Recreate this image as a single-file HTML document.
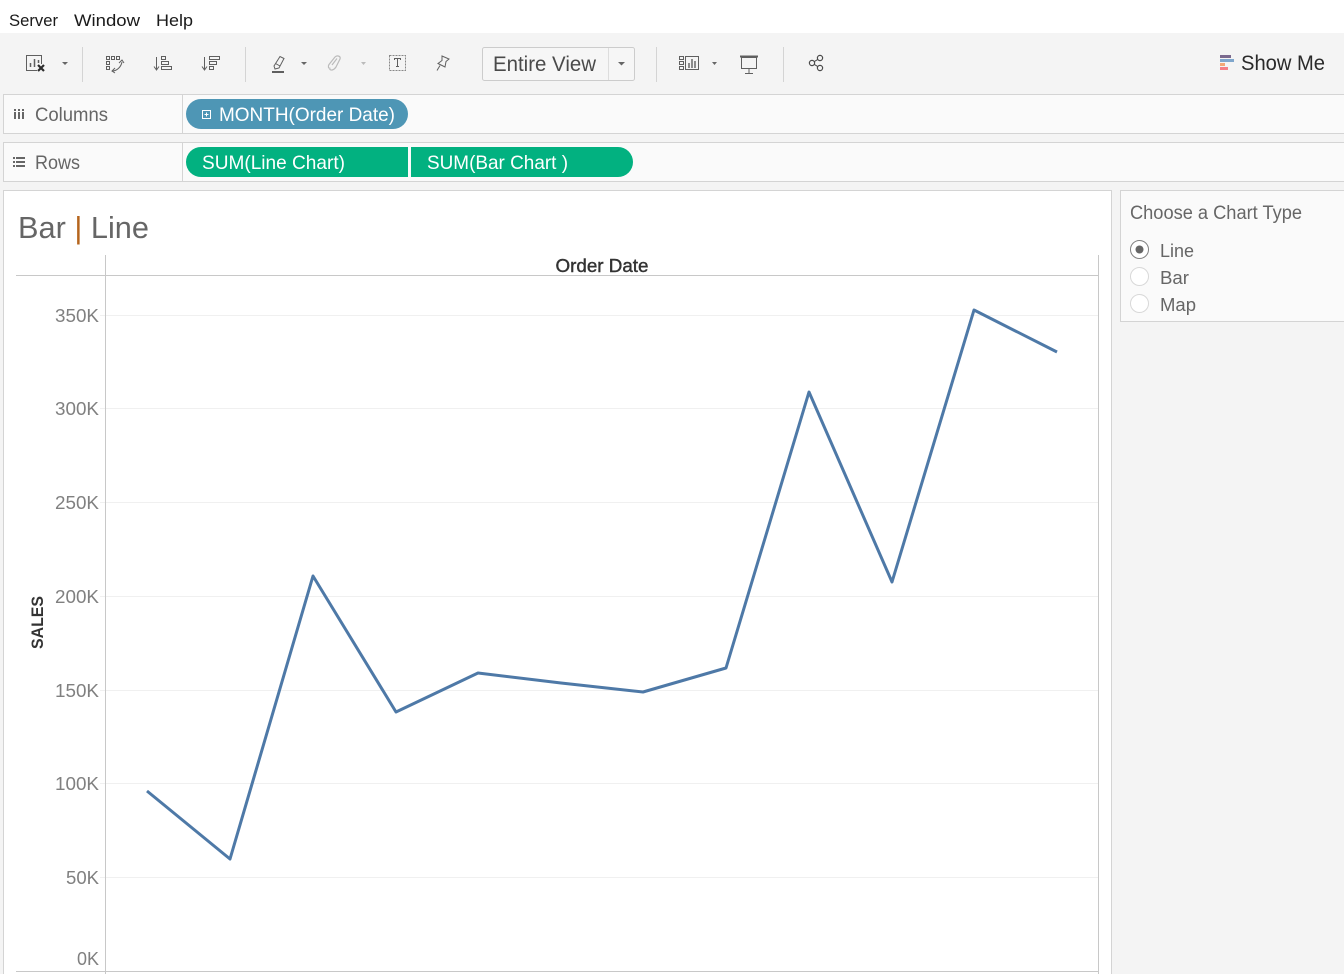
<!DOCTYPE html>
<html><head><meta charset="utf-8"><title>Bar | Line</title>
<style>
html,body{margin:0;padding:0;background:#f4f4f4;overflow:hidden}
svg{display:block}
text{font-family:"Liberation Sans",sans-serif}
</style></head><body>
<svg width="1344" height="974" viewBox="0 0 1344 974" xmlns="http://www.w3.org/2000/svg">
<rect width="1344" height="974" fill="#f4f4f4"/>
<rect width="1344" height="33" fill="#fff"/>
<g font-size="17" fill="#1a1a1a">
<text x="9" y="26" textLength="49" lengthAdjust="spacingAndGlyphs">Server</text>
<text x="74" y="26" textLength="66" lengthAdjust="spacingAndGlyphs">Window</text>
<text x="156" y="26" textLength="37" lengthAdjust="spacingAndGlyphs">Help</text>
</g>
<!-- toolbar separators -->
<g stroke="#d4d4d4" stroke-width="1">
<path d="M82.500 47V82M245.500 47V82M656.500 47V82M783.500 47V82"/>
</g>
<!-- Entire view -->
<rect x="482.500" y="47.500" width="152" height="33" rx="2" fill="#f6f6f6" stroke="#ccc"/>
<path d="M608.500 48V80" stroke="#ddd"/>
<text x="493" y="71" font-size="21" fill="#4a4a4a" textLength="103" lengthAdjust="spacingAndGlyphs">Entire View</text>
<!-- toolbar icons -->
<g fill="none" stroke="#5f5f5f" stroke-width="1">
<path d="M41.500 64V55.500H26.500V70.500H37"/>
<path d="M30.500 67V63M34.500 67V59M38.500 63V60" stroke-width="1.500"/>
<path d="M38 65L44 71M44 65L38 71" stroke="#2c2c2c" stroke-width="2.200"/>
<path d="M106.500 56.500h3v3h-3zM111.500 56.500h3v3h-3zM116.500 56.500h3v3h-3zM106.500 61.500h3v3h-3zM106.500 66.500h3v3h-3z"/>
<path d="M122 62C121 67 117 71 112 71"/>
<path d="M119 63L122 60L124 63M115 68L112 71L115 73"/>
<path d="M156.500 57V69M154 66.500L156.500 70L159 66.500"/>
<path d="M161.500 56.500h4v3h-4zM161.500 61.500h7v3h-7zM161.500 66.500h10v3h-10z"/>
<path d="M204.500 57V69M202 66.500L204.500 70L207 66.500"/>
<path d="M209.500 56.500h10v3h-10zM209.500 61.500h7v3h-7zM209.500 66.500h4v3h-4z"/>
<path d="M274 66L280 56.500L284 58.500L279 68L275 69ZM275.500 63.500L280 66"/>
<path d="M330.500 68C328 69 328 66 329 64.500L335 57C337 55 341 56 340 59L336 67C334 70 331 71 329.500 69M332 65L337 58.500" stroke="#bbb" stroke-width="1.200"/>
<rect x="389.500" y="55.500" width="16" height="15" stroke="#888" stroke-dasharray="2 1"/>
<path d="M394.500 60V58.500h6V60M397.500 59V66.500M396 66.500h3" stroke="#5f5f5f"/>
<path d="M442 56L449 59L446 61.500L445 67L438 63.500L442 60.500ZM440 65.500L437 70.500"/>
<path d="M679.500 56.500h4v3h-4zM679.500 61.500h4v3h-4zM679.500 66.500h4v3h-4zM685.500 56.500h13v13h-13z"/>
<path d="M689 68V63M692 68V59M695 68V61" stroke-width="1.400"/>
<path d="M741.500 57.500h15v11h-15zM749 68.500V73M745 73.500h8"/>
<path d="M740 56.500h18" stroke-width="2"/>
<circle cx="820" cy="58" r="2.600" stroke-width="1.200" stroke="#4a4a4a"/>
<circle cx="812" cy="63" r="2.600" stroke-width="1.200" stroke="#4a4a4a"/>
<circle cx="820" cy="68" r="2.600" stroke-width="1.200" stroke="#4a4a4a"/>
<path d="M814.300 61.600L817.800 59.400M814.300 64.400L817.800 66.600" stroke="#4a4a4a"/>
</g>
<rect x="272" y="71" width="12" height="2" fill="#5f5f5f"/>
<g fill="#666">
<path d="M62 62h6l-3 3z"/><path d="M301 62h6l-3 3z"/>
<path d="M712 62h5l-2.500 3z"/>
<path d="M618 62h7l-3.500 3.500z"/>
</g>
<path d="M361 62h5l-2.500 3z" fill="#bbb"/>
<!-- Show me -->
<rect x="1220" y="55" width="11" height="3" fill="#7b6a8e"/>
<rect x="1220" y="59" width="14" height="3" fill="#7fa6cc"/>
<rect x="1220" y="63" width="5" height="3" fill="#f2a877"/>
<rect x="1220" y="67" width="8" height="3" fill="#f47f86"/>
<text x="1241" y="70" font-size="21" fill="#2a2a2a" textLength="84" lengthAdjust="spacingAndGlyphs">Show Me</text>
<!-- shelves -->
<g fill="#fafafa" stroke="#d4d4d4">
<rect x="3.500" y="94.500" width="1345" height="39"/>
<rect x="3.500" y="142.500" width="1345" height="39"/>
</g>
<path d="M182.500 95V133M182.500 143V181" stroke="#d4d4d4"/>
<g fill="#666"><rect x="14" y="112" width="2" height="7"/><rect x="18" y="112" width="2" height="7"/><rect x="22" y="112" width="2" height="7"/>
<rect x="14" y="109" width="2" height="2"/><rect x="18" y="109" width="2" height="2"/><rect x="22" y="109" width="2" height="2"/>
<path d="M13 157h2v2h-2zM16 157h9v2h-9zM13 161h2v2h-2zM16 161h9v2h-9zM13 165h2v2h-2zM16 165h9v2h-9z"/></g>
<g font-size="19" fill="#666">
<text x="35" y="121" textLength="73" lengthAdjust="spacingAndGlyphs">Columns</text>
<text x="35" y="169" textLength="45" lengthAdjust="spacingAndGlyphs">Rows</text>
</g>
<!-- pills -->
<rect x="186" y="99" width="222" height="30" rx="15" fill="#4e96b5"/>
<rect x="202.500" y="110.500" width="8" height="8" fill="none" stroke="#fff"/>
<path d="M204.500 114.500h4M206.500 112.500v4" stroke="#fff"/>
<path d="M201 147H408V177H201A15 15 0 0 1 201 147Z" fill="#02b180"/>
<path d="M411 147H618A15 15 0 0 1 618 177H411Z" fill="#02b180"/>
<g font-size="19.500" fill="#fff">
<text x="219" y="121" textLength="176" lengthAdjust="spacingAndGlyphs">MONTH(Order Date)</text>
<text x="202" y="169" textLength="143" lengthAdjust="spacingAndGlyphs">SUM(Line Chart)</text>
<text x="427" y="169" textLength="141" lengthAdjust="spacingAndGlyphs">SUM(Bar Chart )</text>
</g>
<!-- view -->
<rect x="3.500" y="190.500" width="1108" height="800" fill="#fff" stroke="#d4d4d4"/>
<text x="18" y="238" font-size="31" fill="#666" textLength="131" lengthAdjust="spacingAndGlyphs">Bar <tspan fill="#b5651d">|</tspan> Line</text>
<!-- grid -->
<g stroke="#f0f0f0">
<path d="M100 315.500H1098M100 408.500H1098M100 502.500H1098M100 596.500H1098M100 690.500H1098M100 783.500H1098M100 877.500H1098"/>
</g>
<g stroke="#c8c8c8">
<path d="M105.500 255V974M1098.500 255V974M16 275.500H1098M16 971.500H1098"/>
</g>
<text x="555.500" y="272" font-size="18" fill="#333" textLength="93" lengthAdjust="spacingAndGlyphs" stroke="#333" stroke-width="0.400">Order Date</text>
<g font-size="18" fill="#808080">
<text x="55" y="322" textLength="44" lengthAdjust="spacingAndGlyphs">350K</text>
<text x="55" y="415" textLength="44" lengthAdjust="spacingAndGlyphs">300K</text>
<text x="55" y="509" textLength="44" lengthAdjust="spacingAndGlyphs">250K</text>
<text x="55" y="603" textLength="44" lengthAdjust="spacingAndGlyphs">200K</text>
<text x="55" y="697" textLength="44" lengthAdjust="spacingAndGlyphs">150K</text>
<text x="55" y="790" textLength="44" lengthAdjust="spacingAndGlyphs">100K</text>
<text x="66" y="884" textLength="33" lengthAdjust="spacingAndGlyphs">50K</text>
<text x="77" y="965" textLength="22" lengthAdjust="spacingAndGlyphs">0K</text>
</g>
<text transform="translate(43 649) rotate(-90)" font-size="17" font-weight="bold" fill="#333" textLength="53" lengthAdjust="spacingAndGlyphs">SALES</text>
<polyline fill="none" stroke="#4e79a7" stroke-width="3" stroke-linejoin="round" points="147,791 230,859 313,576 396,712 478,673 561,683 643,692 726,668 809,392 892,582 974,310 1057,352"/>
<!-- right panel -->
<rect x="1120.500" y="190.500" width="230" height="131" fill="#fafafa" stroke="#d4d4d4"/>
<text x="1130" y="219" font-size="19" fill="#666" textLength="172" lengthAdjust="spacingAndGlyphs">Choose a Chart Type</text>
<circle cx="1139.500" cy="249.500" r="9" fill="#fff" stroke="#808080"/>
<circle cx="1139.500" cy="249.500" r="4" fill="#666"/>
<circle cx="1139.500" cy="276.500" r="9" fill="#fff" stroke="#d8d8d8"/>
<circle cx="1139.500" cy="303.500" r="9" fill="#fff" stroke="#d8d8d8"/>
<g font-size="18.500" fill="#666">
<text x="1160" y="257" textLength="34" lengthAdjust="spacingAndGlyphs">Line</text>
<text x="1160" y="284" textLength="29" lengthAdjust="spacingAndGlyphs">Bar</text>
<text x="1160" y="311" textLength="36" lengthAdjust="spacingAndGlyphs">Map</text>
</g>
</svg>
</body></html>
